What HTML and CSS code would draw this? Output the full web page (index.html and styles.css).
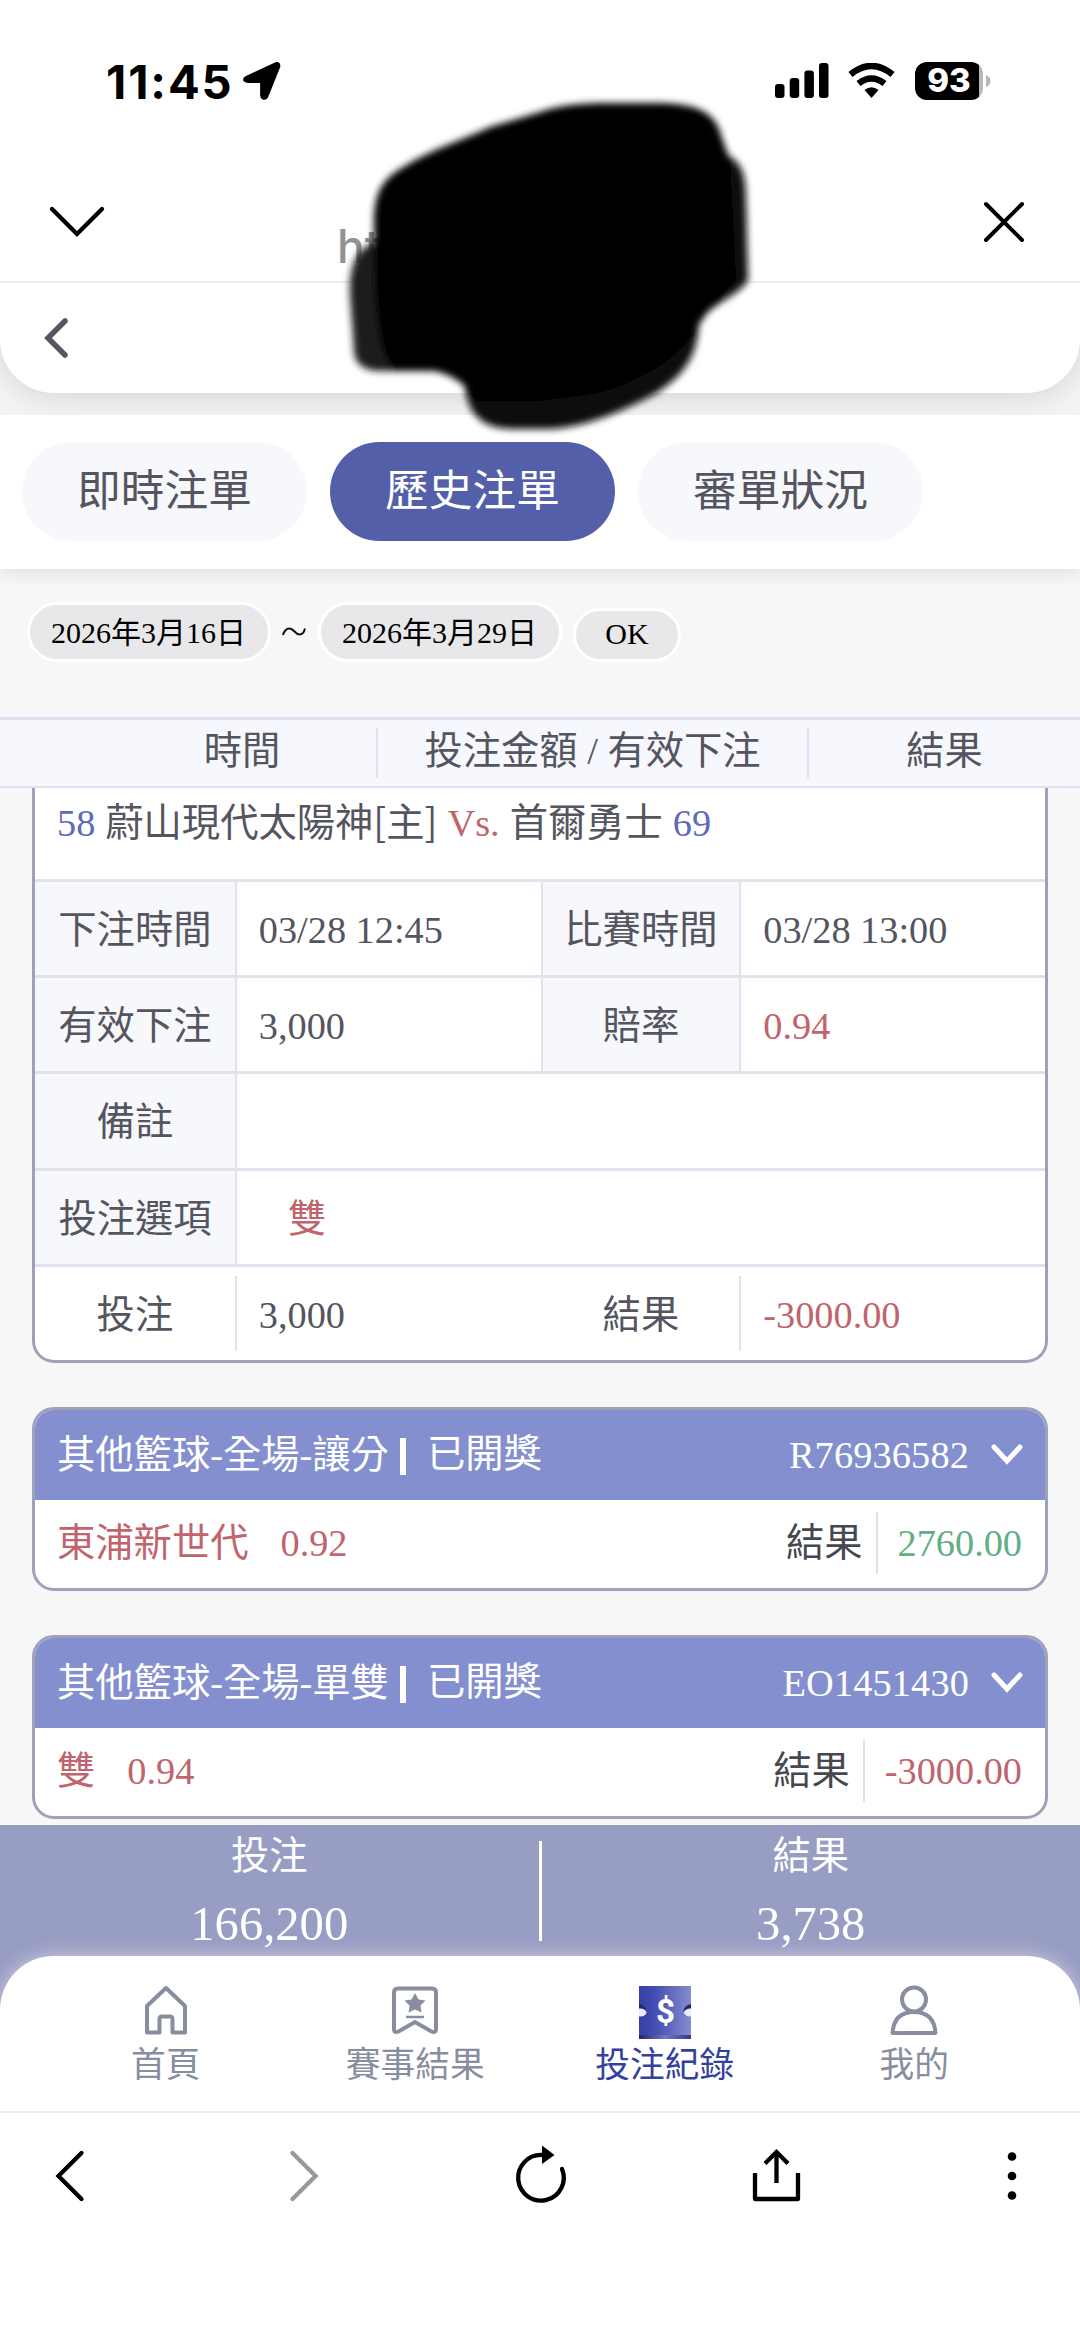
FILE: index.html
```html
<!DOCTYPE html>
<html lang="zh-Hant">
<head>
<meta charset="utf-8">
<title>投注紀錄</title>
<link rel="stylesheet" href="styles.css">
</head>
<body>
<div class="screen">
  <header class="status">
    <div class="status-left">
      <span class="clock">11:45</span>
      <svg width="40" height="40" viewBox="0 0 40 40"><path d="M3 16.500 32.500 2.600Q36.500 1.600 36 5.500L24 35.500Q22.500 38 20 37.200Q18.400 36.500 18.400 34V20.600H5Q1.600 20.200 1.400 18.600 1.300 17.200 3 16.500Z" fill="#000" stroke="#000" stroke-width="2.600" stroke-linejoin="round"/></svg>
    </div>
    <div class="status-right">
      <svg width="54" height="36" viewBox="0 0 54 36"><rect x="0" y="21" width="9.500" height="14" rx="3"/><rect x="14.700" y="15" width="9.500" height="20" rx="3"/><rect x="29.400" y="7.500" width="9.500" height="27.500" rx="3"/><rect x="44" y="0" width="9.500" height="35" rx="3"/></svg>
      <svg class="wifi" width="47" height="36" viewBox="0 0 47 36"><g fill="none" stroke="#000"><path d="M2.500 11.500Q23.500-5.500 44.500 11.500" stroke-width="6.500"/><path d="M10.500 20.500Q23.500 10.500 36.500 20.500" stroke-width="6.500"/></g><path d="M16.500 27Q23.500 21.500 30.500 27L23.500 35Z"/></svg>
      <div class="battery">93</div>
      <svg class="nub" width="5" height="12" viewBox="0 0 5 12"><path d="M0 0Q4.500 2 4.500 6T0 12Z" fill="#b8b8b8"/></svg>
    </div>
  </header>

  <div class="browser-head">
    <svg width="58" height="40" viewBox="0 0 58 40"><path d="M4 7 29 32 54 7" fill="none" stroke="#000" stroke-width="4.300" stroke-linecap="round"/></svg>
    <span class="url">ht</span>
    <svg width="42" height="42" viewBox="0 0 42 42"><path d="M3 3 39 39M39 3 3 39" fill="none" stroke="#000" stroke-width="4" stroke-linecap="round"/></svg>
  </div>

  <div class="app-head">
    <svg width="26" height="42" viewBox="0 0 26 42"><path d="M21 4 4 21 21 38" fill="none" stroke="#55565f" stroke-width="5.500" stroke-linecap="round"/></svg>
  </div>

  <nav class="tabs">
    <a class="tab">即時注單</a>
    <a class="tab active">歷史注單</a>
    <a class="tab">審單狀況</a>
  </nav>

  <div class="filter">
    <span class="date">2026年3月16日</span>
    <svg class="tilde" width="24" height="10" viewBox="0 0 24 10"><path d="M1 8Q3 1.500 7.500 1.500C12 1.500 13 7.500 17.500 7.500Q21.500 7.500 23 1.500" fill="none" stroke="#111" stroke-width="2"/></svg>
    <span class="date">2026年3月29日</span>
    <span class="ok">OK</span>
  </div>

  <div class="list-head">
    <span class="col col-time">時間</span>
    <span class="col col-bet">投注金額 / 有效下注</span>
    <span class="col col-result">結果</span>
  </div>

  <main class="list">
    <section class="detail">
      <div class="match"><span class="blue">58</span> 蔚山現代太陽神<span class="cjk">[主]</span> <span class="red">Vs.</span> 首爾勇士 <span class="blue">69</span></div>
      <div class="row">
        <span class="label">下注時間</span><span class="value">03/28 12:45</span>
        <span class="label second">比賽時間</span><span class="value">03/28 13:00</span>
      </div>
      <div class="row">
        <span class="label">有效下注</span><span class="value">3,000</span>
        <span class="label second">賠率</span><span class="value red">0.94</span>
      </div>
      <div class="row"><span class="label">備註</span><span class="value"></span></div>
      <div class="row"><span class="label">投注選項</span><span class="value pick red">雙</span></div>
      <div class="row total">
        <span class="label">投注</span><span class="value">3,000</span>
        <span class="label second">結果</span><span class="value red">-3000.00</span>
      </div>
    </section>

    <section class="bet">
      <div class="bet-head">
        <span>其他籃球-全場-讓分</span><i class="bar"></i><span class="state">已開獎</span>
        <span class="code">R76936582</span>
        <svg width="34" height="24" viewBox="0 0 34 24"><path d="M4 4 17 18 30 4" fill="none" stroke="#fff" stroke-width="5" stroke-linecap="round"/></svg>
      </div>
      <div class="bet-body">
        <span class="red">東浦新世代</span><span class="odds red">0.92</span>
        <span class="result">結果</span><span class="amount green">2760.00</span>
      </div>
    </section>

    <section class="bet">
      <div class="bet-head">
        <span>其他籃球-全場-單雙</span><i class="bar"></i><span class="state">已開獎</span>
        <span class="code">EO1451430</span>
        <svg width="34" height="24" viewBox="0 0 34 24"><path d="M4 4 17 18 30 4" fill="none" stroke="#fff" stroke-width="5" stroke-linecap="round"/></svg>
      </div>
      <div class="bet-body">
        <span class="red">雙</span><span class="odds red">0.94</span>
        <span class="result">結果</span><span class="amount red">-3000.00</span>
      </div>
    </section>
  </main>

  <div class="summary">
    <div class="sum"><span>投注</span><b>166,200</b></div>
    <i class="sum-line"></i>
    <div class="sum"><span>結果</span><b>3,738</b></div>
  </div>

  <nav class="app-nav">
    <a class="nav-item">
      <svg width="52" height="54" viewBox="0 0 52 54"><path d="M26 3 45 21V47.500H32.500V34Q32.500 31.500 30 31.500H22Q19.500 31.500 19.500 34V47.500H7V21Z" fill="none" stroke="#888da0" stroke-width="4" stroke-linejoin="round"/></svg>
      <span>首頁</span>
    </a>
    <a class="nav-item">
      <svg width="52" height="54" viewBox="0 0 52 54"><path d="M9 3.500H43Q47 3.500 47 7.500V44Q47 48.500 42.500 46.500L26 37 9.500 46.500Q5 48.500 5 44V7.500Q5 3.500 9 3.500Z" fill="none" stroke="#888da0" stroke-width="4"/><path d="M26 8 29.500 14.500 36.500 15.500 31.500 20.500 32.500 27.500 26 24.500 19.500 27.500 20.500 20.500 15.500 15.500 22.500 14.500Z" fill="#888da0"/><path d="M17 32H35" stroke="#888da0" stroke-width="2.500"/></svg>
      <span>賽事結果</span>
    </a>
    <a class="nav-item current">
      <svg width="52" height="54" viewBox="0 0 52 54">
        <defs>
          <linearGradient id="ticket" x1="0" y1="0" x2="1" y2="0"><stop offset="0" stop-color="#3440a4"/><stop offset=".3" stop-color="#434db2"/><stop offset="1" stop-color="#858ccd"/></linearGradient>
          <linearGradient id="edge" x1="0" y1="0" x2="1" y2="0"><stop offset="0" stop-color="#20276a"/><stop offset=".5" stop-color="#6f79c4"/><stop offset="1" stop-color="#333b88"/></linearGradient>
        </defs>
        <rect y="1" width="52" height="53" fill="url(#ticket)"/><rect y="50" width="52" height="4" fill="url(#edge)"/>
        <path d="M0 19Q6 19 7.500 27H0ZM52 19Q45 20 44.500 27H52Z" fill="#222968"/>
        <ellipse cx="1" cy="27.500" rx="6.500" ry="4" fill="#e9ebff"/><ellipse cx="51.500" cy="27.500" rx="6.500" ry="4" fill="#e9ebff"/>
        <text x="26.500" y="37.500" text-anchor="middle" class="dollar">$</text>
      </svg>
      <span>投注紀錄</span>
    </a>
    <a class="nav-item">
      <svg width="52" height="54" viewBox="0 0 52 54"><g fill="none" stroke="#888da0" stroke-width="4" stroke-linejoin="round"><circle cx="26" cy="14.500" r="12"/><path d="M4.500 48Q6 27 26 27T47.500 48Z"/></g></svg>
      <span>我的</span>
    </a>
  </nav>

  <footer class="browser-bar">
    <svg width="60" height="60" viewBox="0 0 60 60"><path d="M43.500 7 20.500 30 43.500 53" fill="none" stroke="#000" stroke-width="4.300" stroke-linecap="round"/></svg>
    <svg width="60" height="60" viewBox="0 0 60 60"><path d="M18.500 7 41.500 30 18.500 53" fill="none" stroke="#999" stroke-width="4.300" stroke-linecap="round"/></svg>
    <svg width="60" height="66" viewBox="0 0 60 66"><path d="M32 12A22.800 22.800 0 1 0 52 26" fill="none" stroke="#000" stroke-width="4.300" stroke-linecap="round"/><path d="M32 2.500 44.500 12 32 21Z"/></svg>
    <svg width="60" height="60" viewBox="0 0 60 60"><g fill="none" stroke="#000" stroke-width="4.300"><path d="M9 27V53H52V27" stroke-linejoin="round"/><path d="M30.500 37V6M19 17.500 30.500 6 42 17.500"/></g></svg>
    <svg width="60" height="60" viewBox="0 0 60 60"><circle cx="30" cy="10.500" r="4.300"/><circle cx="30" cy="30" r="4.300"/><circle cx="30" cy="49.500" r="4.300"/></svg>
  </footer>

  <svg class="scribble" width="430" height="350" viewBox="330 90 430 350">
    <defs><filter id="soft" x="-10%" y="-10%" width="120%" height="120%"><feGaussianBlur stdDeviation="3.500"/></filter></defs>
    <g filter="url(#soft)">
      <path d="M374 243C356 248 349 268 350 295L354 350C354 364 364 371 382 371L450 371 470 300 400 235Z" fill="#1a1a1a"/>
      <path d="M464 370C464 412 478 429 515 429H550C590 427 625 409 655 394C690 372 698 350 699 320L600 320Z" fill="#111"/>
      <path d="M700 150C738 152 746 165 746 200L748 280C740 294 720 300 705 315L640 300Z" fill="#0c0c0c"/>
      <path d="M540 112C560 105 580 103 610 103H660C700 104 716 113 722 138L730 160 736 280C717 300 704 315 693 335C670 365 640 380 600 393L540 401H475C466 382 450 374 430 370H395C380 360 377 320 375 290L374 230C373 195 380 180 405 166C430 150 460 141 490 127Z" fill="#000"/>
    </g>
  </svg>
</div>
</body>
</html>
```
FILE: styles.css
```css
* { box-sizing: border-box; }

body {
  margin: 0;
  background: #fff;
}

.screen {
  position: relative;
  display: flex;
  flex-direction: column;
  width: 1080px;
  height: 2341px;
  overflow: hidden;
  background: #fff;
  color: #54555f;
  font-family: "Liberation Serif", "Noto Sans CJK TC", serif;
  font-size: 38.3px;
  line-height: 46px;
}

svg { display: block; flex: none; }
i { display: block; flex: none; }

/* phone status bar */
.status {
  display: flex;
  justify-content: space-between;
  height: 162px;
  padding: 59px 89px 0 106px;
}
.status-left,
.status-right { display: flex; align-items: center; height: 44px; }
.status-left { gap: 12px; }
.clock {
  width: 125px;
  color: #000;
  font: 700 47px/43px Inter, sans-serif;
  letter-spacing: 1.9px;
  white-space: nowrap;
}
.wifi { margin-left: 19px; }
.battery {
  width: 68px;
  height: 38px;
  margin-left: 20px;
  border-radius: 12px;
  background: linear-gradient(90deg, #000 64px, #b8b8b8 64px);
  color: #fff;
  font: 800 33px/37px Inter, sans-serif;
  text-align: center;
}
.nub { margin-left: 3px; }

/* in-app browser title bar */
.browser-head {
  display: flex;
  align-items: center;
  height: 121px;
  padding: 2px 55px 2px 48px;
  border-bottom: 2px solid #ececec;
}
.url {
  flex: 1;
  padding: 48px 0 0 231px;
  color: #929292;
  font: 500 46px/50px Inter, sans-serif;
}

.app-head {
  position: relative;
  z-index: 1;
  display: flex;
  align-items: center;
  height: 110px;
  padding-left: 44px;
  border-radius: 0 0 54px 54px;
  background: #fff;
  box-shadow: 0 4px 30px rgba(0, 0, 0, .13);
  clip-path: inset(0 0 -22px 0);
}

.tabs {
  position: relative;
  display: flex;
  gap: 23px;
  height: 176px;
  padding: 49px 22px 28px;
  border-top: 22px solid #f4f4f4;
  box-shadow: 0 4px 18px rgba(0, 0, 0, .1);
  background: #fff;
}
/* page colour behind the rounded corners of the header */
.tabs::before {
  content: "";
  position: absolute;
  top: -76px;
  left: 0;
  width: 100%;
  height: 54px;
  background: #f4f4f4;
}
.tab {
  height: 99px;
  width: 285px;
  margin-top: -22px;
  border-radius: 50px;
  background: #f7f8fc;
  font-size: 43.7px;
  line-height: 99px;
  text-align: center;
}
.tab.active { background: #545fa9; color: #fff; }

.filter {
  display: flex;
  align-items: flex-end;
  height: 148px;
  padding: 0 27px 55px;
  background: #f7f7f7;
  color: #000;
  font-size: 30px;
}
.date,
.ok {
  border: 3px solid #fff;
  border-radius: 32px;
  background: #e8e8ea;
  text-align: center;
  white-space: nowrap;
}
.date { width: 244px; height: 60px; padding-right: 1px; line-height: 56px; }
.ok { width: 108px; height: 54px; margin-left: 11px; line-height: 45px; }
.tilde { margin: 0 12px 25px 11px; }

.list-head {
  display: flex;
  align-items: center;
  height: 71px;
  padding-left: 108px;
  border-top: 3px solid #e2e2ee;
  border-bottom: 2px solid #e2e2ee;
  background: #f7f8fd;
  text-align: center;
}
.col { height: 50px; line-height: 47px; }
.col-time { width: 270px; border-right: 2px solid #e2e2ee; }
.col-bet { width: 431px; border-right: 2px solid #e2e2ee; }
.col-result { flex: 1; }

.list {
  display: flex;
  flex-direction: column;
  gap: 44px;
  height: 1037px;
  padding: 0 32px;
  overflow: hidden;
  background: #f7f7f7;
}
.detail,
.bet {
  flex: none;
  border: 3px solid #9da1b9;
  border-radius: 22px;
  background: #fff;
  overflow: hidden;
}
.detail {
  height: 575px;
  border-top: 0;
  border-radius: 0 0 22px 22px;
}
.match {
  height: 91px;
  padding: 9px 22px 0;
  white-space: nowrap;
  word-spacing: .4px;
}
.cjk { font-family: "Noto Sans CJK TC", sans-serif; }
.blue { color: #5e6bb8; }
.red { color: #c0646d; }
.green { color: #62ae84; }

.row {
  display: flex;
  height: 96.200px;
  border-top: 3px solid #e2e2ee;
  line-height: 97px;
}
.label {
  width: 202px;
  border-right: 2px solid #e2e2ee;
  background: #f7f8fc;
  text-align: center;
}
.label.second { width: 201px; border-left: 2px solid #e2e2ee; }
.value { width: 304px; padding-left: 22px; }
.value.pick { padding-left: 51px; }
.total { padding: 9px 0 8px; }
.total .label { background: none; height: 75px; line-height: 78px; }
.total .value { line-height: 78px; }
.total .label.second { border-left-color: transparent; }

.bet { height: 184px; }
.bet-head {
  display: flex;
  align-items: center;
  height: 90px;
  padding: 0 21px 0 22px;
  background: #848fcf;
  color: #fff;
}
.bar { width: 6px; height: 37px; margin: 2px 21px 0 11px; background: #fff; }
.state { flex: 1; margin-top: -2px; }
.code { margin-right: 21px; letter-spacing: .15px; }
.bet-body {
  display: flex;
  align-items: center;
  height: 88px;
  padding: 0 23px 3px 22px;
}
.odds { margin-left: 32px; flex: 1; }
.result { color: #46474f; padding-right: 13px; }
.amount {
  height: 62px;
  padding-left: 20px;
  border-left: 2px solid #e2e2e9;
  line-height: 62px;
}

.summary {
  display: flex;
  height: 186px;
  background: #989dc4;
  color: #fff;
}
.sum {
  flex: 1;
  display: flex;
  flex-direction: column;
  align-items: center;
  padding: 8px 0 0;
}
.sum b { margin-top: 18px; font-weight: 400; font-size: 48.6px; line-height: 54px; }
.sum-line { width: 3px; height: 100px; margin-top: 16px; background: #fff; }

.app-nav {
  position: relative;
  display: flex;
  height: 157px;
  margin-top: -55px;
  padding: 29px 41px 0;
  border-bottom: 2px solid #ececec;
  border-radius: 54px 54px 0 0;
  background: #fff;
  box-shadow: 0 0 18px rgba(225, 222, 225, .75);
  clip-path: inset(-30px 0 0 0);
}
.nav-item {
  flex: 1;
  display: flex;
  flex-direction: column;
  align-items: center;
  color: #888da0;
  font-size: 34.700px;
}
.nav-item span { margin-top: 4px; }
.current { color: #3440a0; }
.dollar { fill: #fff; font: 700 33px Roboto, sans-serif; }

.browser-bar {
  display: flex;
  justify-content: space-between;
  align-items: center;
  height: 126px;
  padding: 0 38px;
}

/* hand-drawn redaction over the page title */
.scribble { position: absolute; z-index: 2; left: 330px; top: 90px; }
```
